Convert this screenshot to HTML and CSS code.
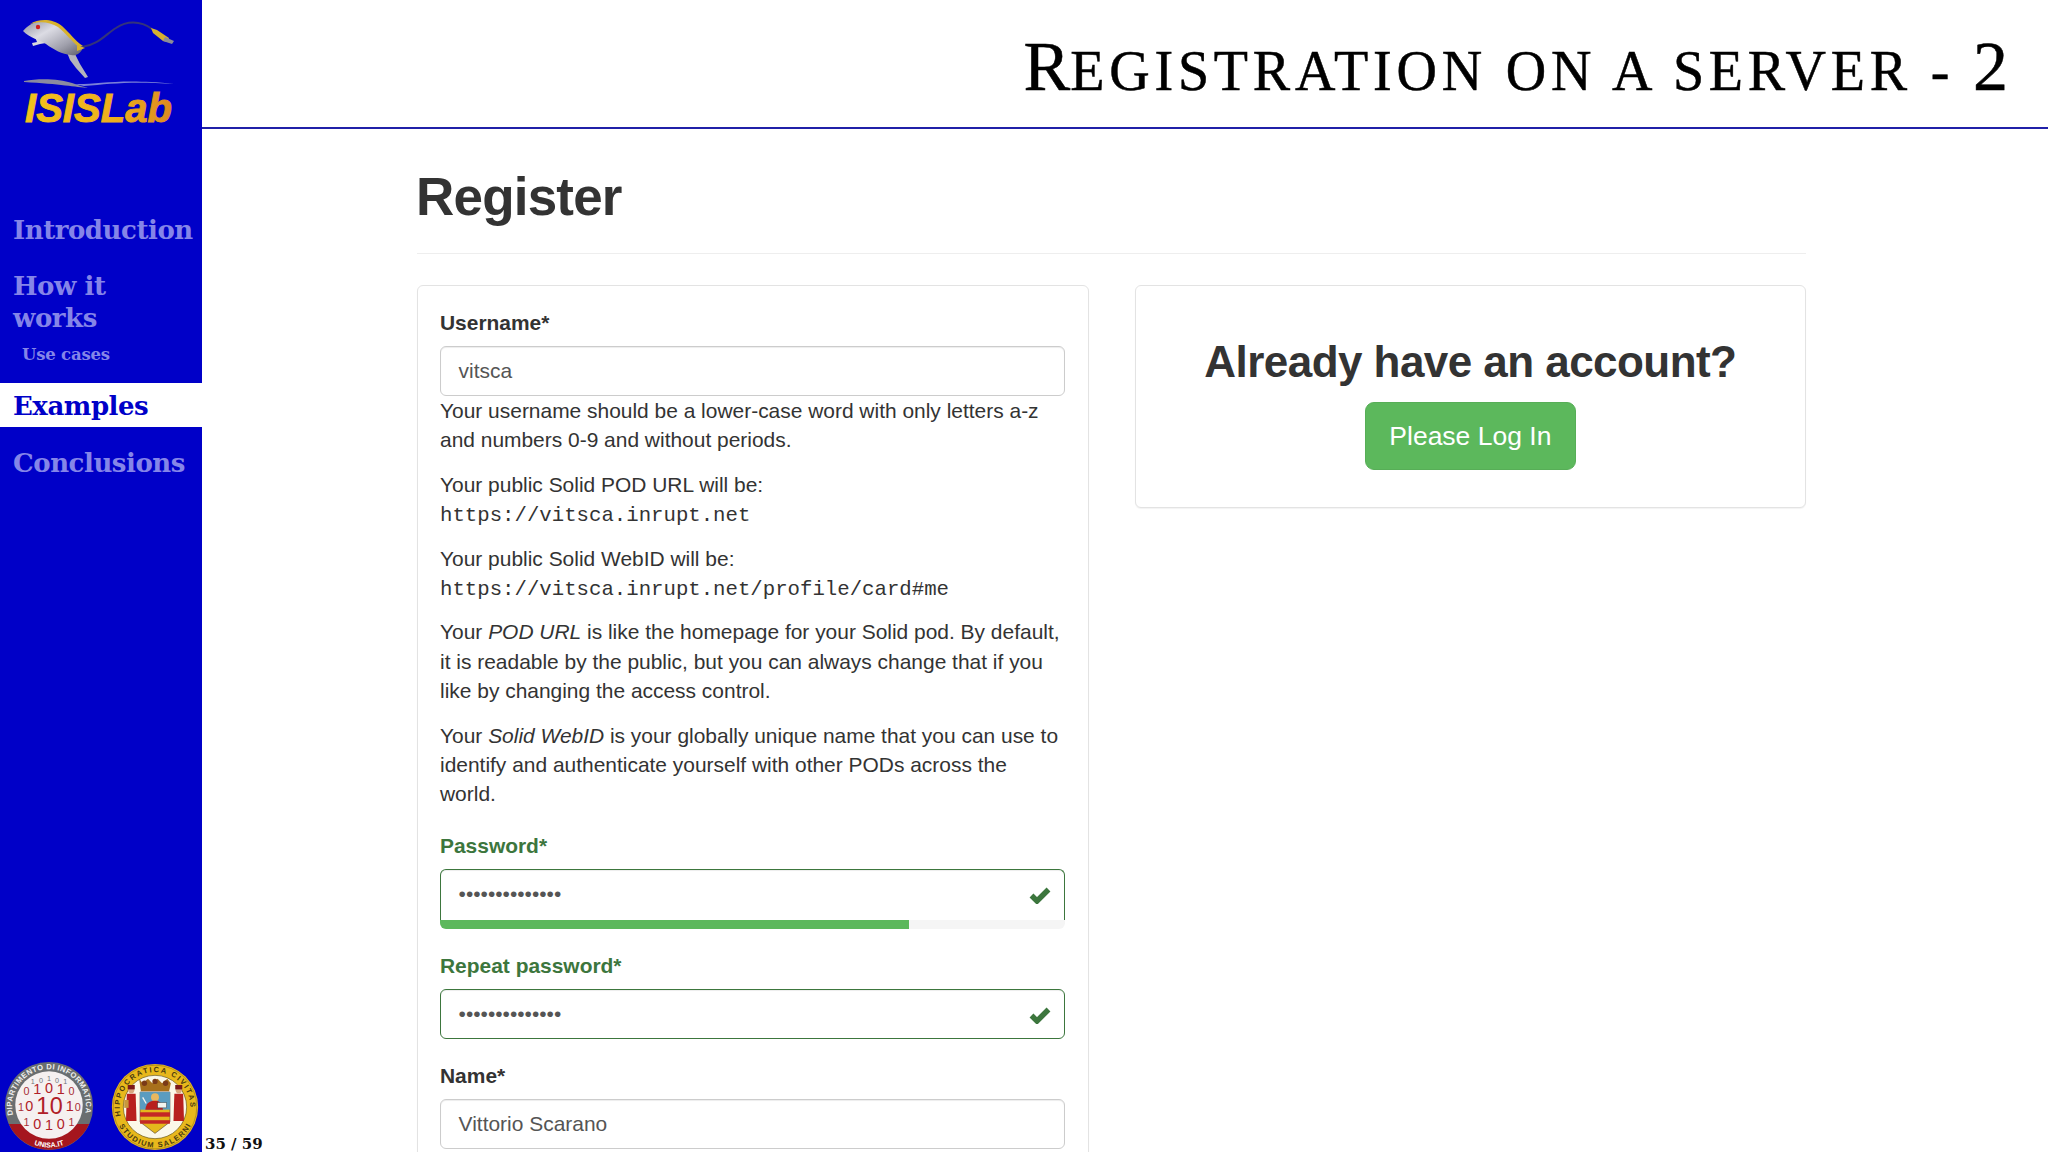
FILE: index.html
```html
<!DOCTYPE html>
<html lang="en">
<head>
<meta charset="utf-8">
<title>Registration on a server - 2</title>
<link rel="stylesheet" href="styles.css">
</head>
<body>
<div class="slide">
  <aside class="sidebar">
    <svg class="logo" viewBox="0 0 202 130" width="202" height="130" aria-label="ISISLab logo">
      <defs>
        <linearGradient id="gold" x1="0" y1="0" x2="1" y2="0">
          <stop offset="0" stop-color="#f2c21c"/><stop offset=".6" stop-color="#eeb01c"/><stop offset="1" stop-color="#dd8a20"/>
        </linearGradient>
        <linearGradient id="silver" x1="0" y1="0" x2="1" y2="1">
          <stop offset="0" stop-color="#8c8c9c"/><stop offset=".35" stop-color="#dcdce4"/><stop offset=".7" stop-color="#a0a0ac"/><stop offset="1" stop-color="#5c5c68"/>
        </linearGradient>
      </defs>
      <path class="cable" d="M82 47C98 45 106 34 116 28C126 21 140 20 152 29"/>
      <path class="usb" d="M151 28L157 30L169 38L168 42L163 41L153 33Z"/>
      <path class="usb-tip" d="M165 37L174 41L172 44L163 41Z"/>
      <path class="rear-leg" d="M66 50L75 54L80 64L88 77L85 78L76 68L70 60Z"/>
      <path class="front-leg" d="M40 36L46 43L40 44L33 46L32 43L37 42L35 37Z"/>
      <path class="body" d="M23 31C27 26 33 22 41 21C53 20 63 27 70 35C75 41 79 46 83 48C80 54 76 56 71 55C62 54 54 50 46 44C40 40 30 38 23 31Z"/>
      <path class="stripe" d="M30 24C38 19 52 18 62 26C70 33 75 41 83 46L79 47C72 42 66 33 58 27C50 22 40 21 30 24Z"/>
      <path class="stripe" d="M77 45L85 48L77 51Z"/>
      <circle class="eye" cx="38" cy="27" r="2.200"/>
      <path class="water-grey" d="M24 81C40 78 60 79 72 83C78 85 84 87 88 88C76 87 60 84 24 82Z"/>
      <path class="water-blue" d="M74 84C96 85 120 78 174 84C130 81 110 84 84 86Z"/>
      <text class="logo-text" x="25" y="122" textLength="147" lengthAdjust="spacingAndGlyphs">ISISLab</text>
    </svg>
    <nav class="nav">
      <a class="nav-item">Introduction</a>
      <a class="nav-item nav-item-how">How it works</a>
      <a class="nav-sub">Use cases</a>
      <a class="nav-item nav-active">Examples</a>
      <a class="nav-item">Conclusions</a>
    </nav>
    <div class="seals">
      <svg class="seal-a" viewBox="-50 -50 100 100" width="90" height="90" aria-label="Dipartimento di Informatica">
        <defs>
          <path id="arc-top" d="M-39.800 10A41 41 0 1 1 39.800 10"/>
          <path id="arc-bot" d="M-30 35A46 46 0 0 0 30 35"/>
        </defs>
        <circle r="49" fill="#6a6e70"/>
        <path d="M-44.600 20A49 49 0 0 0 44.600 20Z" fill="#a5161e"/>
        <circle r="37.500" cy="-1" fill="#f5f0f0"/>
        <text class="seal-a-ring"><textPath href="#arc-top" textLength="146">DIPARTIMENTO DI INFORMATICA</textPath></text>
        <text class="seal-a-foot"><textPath href="#arc-bot" startOffset="50%">UNISA.IT</textPath></text>
        <text class="d"><tspan class="g" x="-18" y="-24">1</tspan><tspan class="g" x="-9" y="-26">0</tspan><tspan class="g" x="0" y="-28">1</tspan><tspan class="g" x="9" y="-26">0</tspan><tspan class="g" x="18" y="-24">1</tspan></text>
        <text class="d"><tspan class="m" x="-25" y="-12">0</tspan><tspan class="l" x="-13" y="-13">1</tspan><tspan class="l" x="0" y="-15">0</tspan><tspan class="l" x="13" y="-13">1</tspan><tspan class="m" x="25" y="-12">0</tspan></text>
        <text class="d"><tspan class="m" x="-31" y="5">1</tspan><tspan class="l" x="-22" y="6">0</tspan><tspan class="xl" x="-7" y="9">1</tspan><tspan class="xl" x="8" y="9">0</tspan><tspan class="l" x="23" y="6">1</tspan><tspan class="m" x="32" y="5">0</tspan></text>
        <text class="d"><tspan class="m" x="-25" y="22">1</tspan><tspan class="l" x="-13" y="25">0</tspan><tspan class="l" x="0" y="27">1</tspan><tspan class="l" x="13" y="25">0</tspan><tspan class="m" x="25" y="22">1</tspan></text>
      </svg>
      <svg class="seal-b" viewBox="-50 -50 100 100" width="88" height="88" aria-label="Universita di Salerno">
        <defs>
          <path id="seal-top" d="M-38.800 10A40 40 0 1 1 38.800 10"/>
          <path id="seal-bot" d="M-43.200 15.700A46 46 0 0 0 43.200 15.700"/>
        </defs>
        <circle r="49" fill="#e8b81c"/>
        <circle r="47.500" class="ring-line"/>
        <circle r="36" fill="#fbf8e8" stroke="#6a5a20" stroke-width=".8"/>
        <text class="seal-b-ring"><textPath href="#seal-top" textLength="135">HIPPOCRATICA CIVITAS</textPath></text>
        <text class="seal-b-ring"><textPath href="#seal-bot" startOffset="6" textLength="100">STUDIUM SALERNI</textPath></text>
        <path d="M-18 -32L-14 -27L-8 -32L-3 -27L3 -32L8 -27L14 -32L18 -27L16 -18H-16Z" fill="#a8701c"/>
        <circle cx="-12" cy="-27" r="3" fill="#7a3a18"/><circle cy="-29" r="3" fill="#7a3a18"/><circle cx="12" cy="-27" r="3" fill="#7a3a18"/>
        <path d="M-17 -17H17V17L0 30L-17 17Z" fill="#e4b81c" stroke="#40303a" stroke-width=".6"/>
        <rect x="-17" y="-17" width="34" height="20" fill="#5a9cc0"/>
        <rect x="-17" y="6" width="34" height="5" fill="#c42826"/>
        <rect x="-17" y="15" width="34" height="4" fill="#c42826"/>
        <circle cy="-11" r="4.500" fill="#e8b860"/>
        <path d="M-11 3C-10 -6 -4 -7 0 -7C4 -7 8 -6 9 3Z" fill="#b8201e"/>
        <rect x="3" y="-5" width="10" height="6" fill="#f4f4ee" stroke="#333" stroke-width=".5"/>
        <path d="M-10 -4L-14 -11" stroke="#f4f4ee" stroke-width="1.500"/>
        <circle cx="-27" cy="-19" r="3.500" fill="#d8a880"/>
        <rect x="-31" y="-25" width="8" height="5" fill="#7a1a1a"/>
        <path d="M-32 -15L-22 -15L-21 16L-33 16Z" fill="#b8201e"/>
        <rect x="-35" y="-8" width="5" height="9" fill="#c8983c"/>
        <circle cx="27" cy="-19" r="3.500" fill="#d8a880"/>
        <rect x="23" y="-25" width="8" height="5" fill="#7a1a1a"/>
        <path d="M22 -15L32 -15L33 16L21 16Z" fill="#b8201e"/>
      </svg>
    </div>
  </aside>
  <main class="main">
    <header class="title-bar">
      <h1 class="title"><span class="title-big">R</span>egistration on a server - <span class="title-big">2</span></h1>
    </header>
    <div class="content">
      <div class="page-header"><h1 class="register">Register</h1></div>
      <div class="columns">
        <section class="card card-form">
          <div class="group">
            <div class="label">Username*</div>
            <div class="input">vitsca</div>
            <div class="help">
              <p>Your username should be a lower-case word with only letters a-z and numbers 0-9 and without periods.</p>
              <p>Your public Solid POD URL will be:<br><code>https://vitsca.inrupt.net</code></p>
              <p>Your public Solid WebID will be:<br><code>https://vitsca.inrupt.net/profile/card#me</code></p>
              <p>Your <em>POD URL</em> is like the homepage for your Solid pod. By default, it is readable by the public, but you can always change that if you like by changing the access control.</p>
              <p>Your <em>Solid WebID</em> is your globally unique name that you can use to identify and authenticate yourself with other PODs across the world.</p>
            </div>
          </div>
          <div class="group ok">
            <div class="label">Password*</div>
            <div class="input input-top dots">••••••••••••••
              <svg class="tick" viewBox="0 0 22 18" width="22" height="18"><path d="M2.500 9.500L8 15L19.500 3.500"/></svg>
            </div>
            <div class="meter"><div class="meter-bar" style="width:75%"></div></div>
          </div>
          <div class="group ok">
            <div class="label">Repeat password*</div>
            <div class="input dots">••••••••••••••
              <svg class="tick" viewBox="0 0 22 18" width="22" height="18"><path d="M2.500 9.500L8 15L19.500 3.500"/></svg>
            </div>
          </div>
          <div class="group">
            <div class="label">Name*</div>
            <div class="input">Vittorio Scarano</div>
          </div>
        </section>
        <section class="card card-login">
          <h2 class="login-title">Already have an account?</h2>
          <a class="btn">Please Log In</a>
        </section>
      </div>
    </div>
    <div class="page-no">35 / 59</div>
  </main>
</div>
</body>
</html>
```
FILE: styles.css
```css
* { box-sizing: border-box; }
html, body { margin: 0; height: 100%; background: #fff; }
body { overflow: hidden; font-family: "Liberation Sans", Arial, sans-serif; color: #333; }
.slide { display: flex; width: 2048px; height: 1152px; overflow: hidden; }

/* sidebar */
.sidebar { flex: 0 0 202px; width: 202px; min-width: 0; overflow: hidden; display: flex; flex-direction: column; background: #0000c8; height: 100%; }
.logo { display: block; flex: none; }
.cable { fill: none; stroke: #34347a; stroke-width: 2; }
.usb { fill: #d8b030; }
.usb-tip { fill: #8c8c98; }
.rear-leg { fill: #b4b4bc; }
.front-leg { fill: #d8d8dc; }
.body { fill: url(#silver); }
.stripe { fill: #d8b22c; }
.eye { fill: #d02020; }
.water-grey { fill: #8a8aa0; }
.water-blue { fill: #7a80d8; }
.logo-text { font: italic 700 40px "Liberation Sans", sans-serif; fill: url(#gold); stroke: url(#gold); stroke-width: .9px; }

.nav { display: flex; flex-direction: column; margin-top: 84px; font-family: "DejaVu Serif", serif; font-weight: 700; color: #8585e8; }
.nav-item { display: block; padding: 0 0 0 13px; font-size: 26px; line-height: 32px; letter-spacing: -.45px; white-space: nowrap; }
.nav-item-how { margin-top: 24px; width: 160px; white-space: normal; }
.nav-sub { display: block; padding-left: 22px; margin-top: 9px; font-size: 16.500px; line-height: 24px; letter-spacing: -.2px; height: 40px; }
.nav-active { background: #fff; color: #0000c8; padding-top: 7px; padding-bottom: 5px; margin-bottom: 20px; }
.seals { margin-top: auto; display: flex; align-items: flex-end; gap: 17px; padding: 0 0 1px 4px; }
.seal-a, .seal-b { display: block; flex: none; }
.seal-a-ring { font: 700 8.500px "Liberation Sans", sans-serif; fill: #eee; }
.seal-a-foot { font: 700 8px "Liberation Sans", sans-serif; fill: #fff; text-anchor: middle; }
.d { font-family: "Liberation Sans", sans-serif; text-anchor: middle; fill: #b02028; }
.xl { font-size: 26px; }
.l { font-size: 16px; }
.m { font-size: 12px; fill: #a82e36; }
.g { font-size: 8px; fill: #70747a; }
.seal-b-ring { font: 700 8.500px "Liberation Sans", sans-serif; fill: #4a3a10; }
.ring-line { fill: none; stroke: #7a6018; stroke-width: .5; }

/* main */
.main { flex: 1; position: relative; min-width: 0; }
.title-bar { height: 129px; border-bottom: 2px solid #2020a8; display: flex; justify-content: flex-end; padding: 32px 40px 0 0; }
.title { margin: 0; font-family: "Liberation Serif", serif; font-weight: 400; font-size: 56px; line-height: 70px; text-transform: uppercase; color: #000; letter-spacing: 4.800px; white-space: nowrap; -webkit-text-stroke: .5px #000; }
.title-big { font-size: 70px; letter-spacing: 0; }
.content { padding-left: 215px; width: 1604px; }
.page-header { margin-top: 39px; padding-bottom: 27px; border-bottom: 1px solid #eee; margin-bottom: 31px; }
.register { margin: 0 0 0 -1px; font-size: 53px; line-height: 58px; font-weight: 700; letter-spacing: -.8px; }
.columns { display: flex; gap: 46px; align-items: flex-start; }
.card { flex: 1; background: #fff; border: 1px solid #e3e3e3; border-radius: 6px; box-shadow: 0 1px 1px rgba(0,0,0,.05); }
.card-form { padding: 22px 22.500px 0 22px; height: 1000px; }
.card-login { padding: 52px 22px 37px; text-align: center; height: 223px; }
.login-title { margin: 0 0 15.500px; font-size: 44px; line-height: 48.500px; font-weight: 700; letter-spacing: -.55px; }
.btn { display: inline-block; background: #5cb85c; border: 1px solid #57ae57; border-radius: 9px; color: #fff; font-size: 26.500px; line-height: 37px; padding: 14.500px 23.500px; }

.group { margin-bottom: 22px; font-size: 20.950px; line-height: 29.400px; }
.label { font-weight: 700; margin-bottom: 8.500px; }
.input { position: relative; height: 50px; padding: 9px 17.600px; border: 1px solid #ccc; border-radius: 6px; color: #555; box-shadow: inset 0 1px 1px rgba(0,0,0,.075); background: #fff; }
.help { margin-bottom: 1px; }
.help p { margin: 0 0 15px; }
.help code { font-family: "Liberation Mono", "Courier New", monospace; font-size: 20.700px; line-height: 1; }
.ok .label { color: #3c763d; }
.ok .input { border-color: #3c763d; }
.input-top { height: 51px; border-bottom: 0; border-radius: 6px 6px 0 0; }
.tick { position: absolute; right: 13px; top: 16px; fill: none; stroke: #3c763d; stroke-width: 5.500; }
.meter { height: 9px; background: #f5f5f5; border-radius: 0 0 6px 6px; overflow: hidden; }
.meter-bar { height: 100%; background: #5cb85c; }
.page-no { position: absolute; left: 3px; bottom: 0; font-family: "DejaVu Serif", serif; font-weight: 700; font-size: 15px; line-height: 16px; color: #111; }
```
